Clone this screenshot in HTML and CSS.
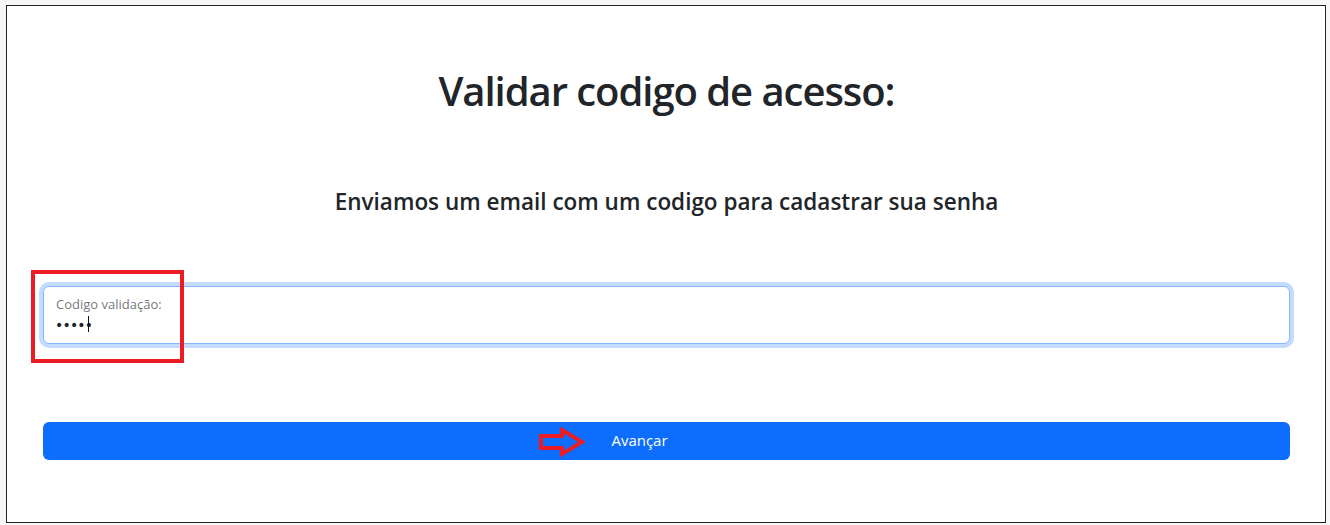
FILE: index.html
```html
<!DOCTYPE html>
<html lang="pt-BR">
<head>
<meta charset="utf-8">
<title>Validar codigo de acesso</title>
<link rel="stylesheet" href="styles.css">
</head>
<body>
<main class="frame">
  <h1 class="title">Validar codigo de acesso:</h1>
  <h4 class="subtitle">Enviamos um email com um codigo para cadastrar sua senha</h4>
  <form class="form">
    <div class="field">
      <input class="field-input" id="codigo" type="password" value="12345" readonly>
      <label class="field-label" for="codigo">Codigo validação:</label>
      <span class="caret"></span>
      <span class="mark-box"></span>
    </div>
    <button class="btn" type="button">
      <svg class="mark-arrow" width="52" height="36" viewBox="0 0 52 36">
        <polygon points="6,12 27,12 27,6 47,18 27,30 27,24 6,24" fill="none" stroke="#ed1c24" stroke-width="4" stroke-linejoin="miter"/>
      </svg>
      Avançar
    </button>
  </form>
</main>
</body>
</html>
```
FILE: styles.css
```css
html, body {
  margin: 0;
  padding: 0;
}
body {
  background: #f6f6f6;
  font-family: "Open Sans", "Noto Sans", sans-serif;
  color: #212529;
  padding: 5px 0 0 6px;
}
.frame {
  box-sizing: border-box;
  width: 1320px;
  height: 518px;
  background: #ffffff;
  border: 1px solid #222222;
  padding: 61px 35px 0 36px;
  display: flex;
  flex-direction: column;
}
.title {
  margin: 0;
  text-align: center;
  font-size: 40px;
  line-height: 48px;
  font-weight: 600;
  letter-spacing: -1.05px;
}
.subtitle {
  margin: 71px 0 0;
  text-align: center;
  font-size: 22.5px;
  line-height: 29px;
  font-weight: 600;
  position: relative;
  top: 1px;
}
.form {
  margin-top: 71px;
  display: flex;
  flex-direction: column;
}
.field {
  position: relative;
  height: 58px;
}
.field-input {
  box-sizing: border-box;
  width: 100%;
  height: 58px;
  border: 1px solid #86b7fe;
  border-radius: 6px;
  box-shadow: 0 0 0 4px rgba(13, 110, 253, 0.25);
  outline: none;
  padding: 25px 12px 6px 11px;
  font-family: "DejaVu Sans", sans-serif;
  font-size: 14px;
  color: #212529;
  letter-spacing: -0.8px;
  background: #fff;
}
.field-label {
  position: absolute;
  left: 13px;
  top: 10px;
  font-size: 13px;
  line-height: 16px;
  color: rgba(33, 37, 41, 0.65);
  pointer-events: none;
}
.caret {
  position: absolute;
  left: 45px;
  top: 30px;
  width: 1px;
  height: 16px;
  background: #111;
}
.mark-box {
  position: absolute;
  left: -12px;
  top: -16px;
  width: 153px;
  height: 93px;
  box-sizing: border-box;
  border: 4px solid #ed1c24;
  pointer-events: none;
}
.btn {
  position: relative;
  margin-top: 78px;
  height: 38px;
  border: 0;
  border-radius: 6px;
  background: #0d6efd;
  color: #ffffff;
  font-family: "Open Sans", "Noto Sans", sans-serif;
  font-size: 15px;
  padding: 0 54px 2px 0;
  cursor: pointer;
}
.mark-arrow {
  position: absolute;
  left: 492px;
  top: 2px;
}
```
